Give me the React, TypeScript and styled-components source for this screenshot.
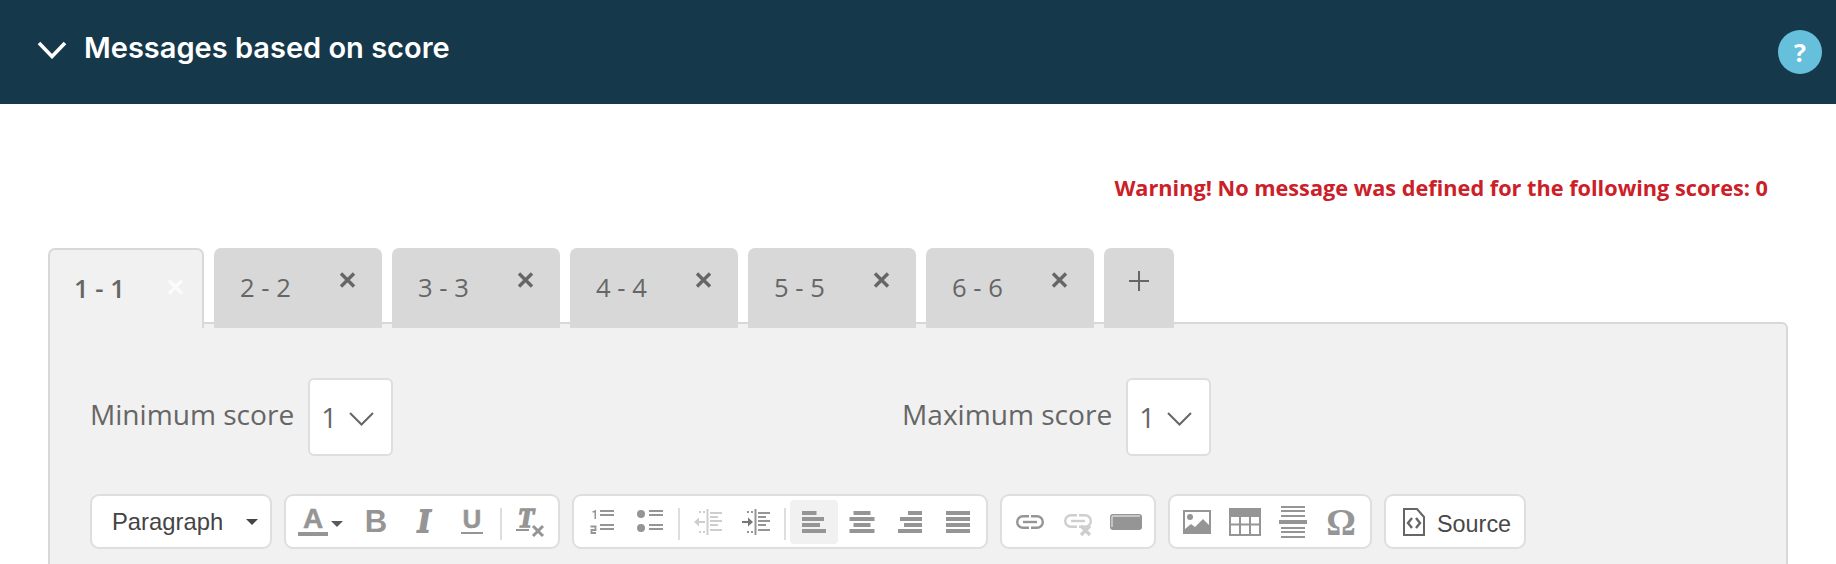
import React from "react";
import styled, { createGlobalStyle } from "styled-components";

const Global = createGlobalStyle`
  html, body { margin: 0; padding: 0; background: #fff; }
  body { overflow: hidden; font-family: "Open Sans", sans-serif; }
`;
const Page = styled.div`height: 564px; overflow: hidden; background: #fff;`;
const Header = styled.header`
  height: 104px; background: #16384b; display: flex; align-items: center;
  padding: 0 14px 0 37px; box-sizing: border-box;
`;
const Chevron = styled.svg`width: 30px; height: 18px; margin-right: 17px; margin-top: -4px; flex: none;`;
const Title = styled.h2`
  margin: -9px 0 0; flex: 1; color: #fff; font: 600 29px/34px Inter, sans-serif;
`;
const Help = styled.div`
  width: 44px; height: 44px; border-radius: 50%; background: #66c0dc; color: #fff;
  font: 700 25px/44px "Open Sans", sans-serif; text-align: center; margin-top: 0;
`;
const Warning = styled.div`
  height: 144px; box-sizing: border-box; padding: 69px 68px 0 0; text-align: right;
  color: #cc2029; font: 700 21.7px/29px "Open Sans", sans-serif;
`;
const Body = styled.div`margin: 0 48px;`;
const Tabs = styled.div`display: flex; gap: 10px; margin-bottom: -6px; position: relative; z-index: 1;`;
const Tab = styled.div<{ $active?: boolean }>`
  height: 80px; box-sizing: border-box; display: flex; justify-content: space-between; align-items: flex-start;
  width: ${p => (p.$active ? 156 : 168)}px;
  padding: ${p => (p.$active ? "23px 18px 0 24px" : "24px 26px 0 26px")};
  background: ${p => (p.$active ? "#f1f1f1" : "#d8d8d8")};
  border-radius: 7px 7px 0 0;
  ${p => (p.$active ? "border: 2px solid #d8d8d8; border-bottom: none;" : "")}
`;
const TabLabel = styled.span<{ $active?: boolean }>`
  color: #666; margin-top: -1px; font: ${p => (p.$active ? 600 : 400)} 25.6px/34px "Open Sans", sans-serif; white-space: nowrap;
`;
const CloseIcon = styled.svg<{ $active?: boolean }>`
  width: 17px; height: 16px; margin-top: ${p => (p.$active ? 6 : 0)}px;
  stroke: ${p => (p.$active ? "#fbfbfb" : "#666")}; stroke-width: 3.4; fill: none; flex: none;
`;
const AddTab = styled.div`
  width: 70px; height: 80px; background: #d8d8d8; border-radius: 7px 7px 0 0;
  display: flex; justify-content: center; padding-top: 23px; box-sizing: border-box;
`;
const PlusIcon = styled.svg`width: 20px; height: 20px; stroke: #666; stroke-width: 2; fill: none;`;
const Panel = styled.div`
  background: #f1f1f1; border: 2px solid #d8d8d8; border-radius: 6px 6px 0 0; height: 400px;
  padding: 54px 40px 0; box-sizing: border-box;
`;
const Scores = styled.div`display: flex; height: 78px; margin-bottom: 38px;`;
const Field = styled.div`display: flex; align-items: center; gap: 14px; width: 812px;`;
const FieldLabel = styled.span`color: #666; margin-top: -7px; font: 400 28.1px/38px "Open Sans", sans-serif; white-space: nowrap;`;
const Select = styled.div`
  width: 85px; height: 78px; box-sizing: border-box; background: #fff; border: 2px solid #dedede; border-radius: 6px;
  display: flex; align-items: center; padding: 0 0 0 11px; gap: 12px;
  color: #666; font: 400 27.8px/38px "Open Sans", sans-serif;
`;
const SelectChevron = styled.svg`width: 25px; height: 14px; stroke: #666; stroke-width: 2; fill: none; margin-top: 4px;`;
const Toolbar = styled.div`display: flex; gap: 12px;`;
const Group = styled.div<{ $w: number; $inset?: number }>`
  width: ${p => p.$w}px; height: 55px; box-sizing: border-box; background: #fff; border: 2px solid #dedede; border-radius: 9px;
  display: flex; padding: 4px 3px 3px ${p => p.$inset ?? 3}px; align-items: stretch;
`;
const ComboText = styled.span`
  flex: 1; color: #444; font: 400 23.8px/44px "Liberation Sans", Arial, sans-serif; padding-left: 17px;
`;
const Caret = styled.i`
  width: 0; height: 0; align-self: center; margin-right: 9px;
  border-left: 6px solid transparent; border-right: 6px solid transparent; border-top: 6px solid #444;
`;
const Btn = styled.div<{ $on?: boolean; $w?: number }>`
  width: ${p => p.$w ?? 48}px; height: 44px; flex: none; display: flex; align-items: center; justify-content: center;
  border-radius: 4px; background: ${p => (p.$on ? "#f1f1f1" : "transparent")};
`;
const Sep = styled.i`width: 2px; height: 32px; margin: 8px 4px 0; background: #dedede; flex: none;`;
const Ico = styled.svg<{ $off?: boolean; $drop?: number }>`
  display: block; flex: none; fill: #959595; stroke: none; overflow: visible;
  opacity: ${p => (p.$off ? 0.45 : 1)}; margin-top: ${p => p.$drop ?? 0}px;
`;
const SourceText = styled.span`
  color: #484848; font: 400 23.4px/44px "Liberation Sans", Arial, sans-serif; margin: 4px 0 0 12px;
`;
const SourceBtn = styled.div`display: flex; align-items: center; padding-left: 14px;`;

const Close = ({ active }: { active?: boolean }) => (
  <CloseIcon $active={active} viewBox="0 0 17 16"><path d="M2 1.5 15 14.5M15 1.5 2 14.5" /></CloseIcon>
);
const Bars = ({ rows }: { rows: [number, number][] }) => (
  <Ico width="26" height="22" viewBox="0 0 26 22">
    {rows.map(([x, w], i) => <rect key={i} x={x} y={i * 6} width={w} height={4} />)}
  </Ico>
);
const ListLines = ({ x }: { x: number }) => (
  <>
    <rect x={x} y="0" width="14" height="2" /><rect x={x} y="4" width="14" height="2" />
    <rect x={x} y="14" width="14" height="2" /><rect x={x} y="18" width="14" height="2" />
  </>
);
const IndentBody = () => (
  <>
    <rect x="5" y="2" width="2" height="2" /><rect x="9" y="2" width="2" height="2" />
    <rect x="5" y="22" width="2" height="2" /><rect x="9" y="22" width="2" height="2" />
    <rect x="12.500" y="0" width="2" height="26" />
    <rect x="16" y="3" width="12" height="2" /><rect x="16" y="7" width="8" height="2" />
    <rect x="16" y="11" width="12" height="2" /><rect x="16" y="15" width="8" height="2" />
    <rect x="16" y="20" width="12" height="2" />
  </>
);
const LinkShape = () => (
  <g fill="none" stroke="#959595" strokeWidth="2.4">
    <path d="M13 1.200H7a5.800 5.800 0 0 0 0 11.600h6" />
    <path d="M15 1.200h6a5.800 5.800 0 0 1 0 11.600h-6" />
    <path d="M7 7H21" />
  </g>
);
const tf = "Liberation Sans, Arial, sans-serif";
const sf = "Liberation Serif, serif";

export default function App() {
  return (
    <Page>
      <Global />
      <Header>
        <Chevron viewBox="0 0 30 18"><path d="M2 2 15 15.5 28 2" fill="none" stroke="#fff" strokeWidth="3.6" /></Chevron>
        <Title>Messages based on score</Title>
        <Help>?</Help>
      </Header>
      <Warning>Warning! No message was defined for the following scores: 0</Warning>
      <Body>
        <Tabs>
          <Tab $active><TabLabel $active>1 - 1</TabLabel><Close active /></Tab>
          {["2 - 2", "3 - 3", "4 - 4", "5 - 5", "6 - 6"].map(t => (
            <Tab key={t}><TabLabel>{t}</TabLabel><Close /></Tab>
          ))}
          <AddTab><PlusIcon viewBox="0 0 20 20"><path d="M10 0V20M0 10H20" /></PlusIcon></AddTab>
        </Tabs>
        <Panel>
          <Scores>
            <Field>
              <FieldLabel>Minimum score</FieldLabel>
              <Select>1<SelectChevron viewBox="0 0 25 14"><path d="M1 1 12.5 12.5 24 1" /></SelectChevron></Select>
            </Field>
            <Field>
              <FieldLabel>Maximum score</FieldLabel>
              <Select>1<SelectChevron viewBox="0 0 25 14"><path d="M1 1 12.5 12.5 24 1" /></SelectChevron></Select>
            </Field>
          </Scores>
          <Toolbar>
            <Group $w={182}><ComboText>Paragraph</ComboText><Caret /></Group>
            <Group $w={276}>
              <Btn $w={63}>
                <Ico width="46" height="28" viewBox="0 0 46 28">
                  <text x="15" y="20" textAnchor="middle" fontFamily={tf} fontWeight="700" fontSize="28" stroke="#959595" strokeWidth="0.5">A</text>
                  <rect x="0" y="24" width="30" height="4" />
                  <path d="M33 13H45L39 19Z" fill="#5a5a5a" />
                </Ico>
              </Btn>
              <Btn>
                <Ico width="24" height="28" viewBox="0 0 24 28"><text x="12" y="24" textAnchor="middle" fontFamily={tf} fontWeight="700" fontSize="31">B</text></Ico>
              </Btn>
              <Btn>
                <Ico width="24" height="28" viewBox="0 0 24 28"><text x="12" y="24" textAnchor="middle" fontFamily={sf} fontStyle="italic" fontWeight="700" fontSize="33" stroke="#959595" strokeWidth="1.8">I</text></Ico>
              </Btn>
              <Btn>
                <Ico width="24" height="28" viewBox="0 0 24 28">
                  <text x="12" y="20" textAnchor="middle" fontFamily={tf} fontWeight="700" fontSize="26" stroke="#959595" strokeWidth="0.5">U</text>
                  <rect x="1" y="24" width="22" height="2" />
                </Ico>
              </Btn>
              <Sep />
              <Btn>
                <Ico width="28" height="30" viewBox="0 0 28 30">
                  <text x="10" y="20" textAnchor="middle" fontFamily={sf} fontStyle="italic" fontWeight="700" fontSize="27" stroke="#959595" strokeWidth="1.4">T</text>
                  <rect x="0" y="22" width="13" height="2" />
                  <path d="M17 19 27 29M27 19 17 29" stroke="#959595" strokeWidth="3" fill="none" />
                </Ico>
              </Btn>
            </Group>
            <Group $w={416} $inset={4}>
              <Btn>
                <Ico width="24" height="24" viewBox="0 0 24 24">
                  <path d="M2.500 1H4.500V0H6V9H4.500V2.500H2.500Z" />
                  <path d="M0.500 16.500H5.500V20H1.500V23H6" fill="none" stroke="#959595" strokeWidth="1.800" />
                  <ListLines x={10} />
                </Ico>
              </Btn>
              <Btn>
                <Ico width="26" height="24" viewBox="0 0 26 24">
                  <circle cx="4" cy="4" r="4" /><circle cx="4" cy="18" r="4" />
                  <ListLines x={12} />
                </Ico>
              </Btn>
              <Sep />
              <Btn>
                <Ico $off width="28" height="26" viewBox="0 0 28 26">
                  <path d="M0 13 5 8.500V12H11V14H5V17.500Z" />
                  <IndentBody />
                </Ico>
              </Btn>
              <Btn>
                <Ico width="28" height="26" viewBox="0 0 28 26">
                  <path d="M11 13 6 8.500V12H0V14H6V17.500Z" fill="#777" />
                  <IndentBody />
                </Ico>
              </Btn>
              <Sep />
              <Btn $on><Bars rows={[[1, 14.5], [1, 22], [1, 18], [1, 24]]} /></Btn>
              <Btn><Bars rows={[[4.500, 17], [0.500, 25], [4.500, 17], [0.500, 25]]} /></Btn>
              <Btn><Bars rows={[[11, 14], [3, 22], [7, 18], [1, 24]]} /></Btn>
              <Btn><Bars rows={[[1, 24], [1, 24], [1, 24], [1, 24]]} /></Btn>
            </Group>
            <Group $w={156} $inset={4}>
              <Btn>
                <Ico width="28" height="14" viewBox="0 0 28 14"><LinkShape /></Ico>
              </Btn>
              <Btn>
                <Ico $off $drop={6} width="28" height="22" viewBox="0 0 28 22">
                  <LinkShape />
                  <path d="M17 12 26 21M26 12 17 21" fill="none" stroke="#959595" strokeWidth="3.200" />
                </Ico>
              </Btn>
              <Btn>
                <Ico width="32" height="16" viewBox="0 0 32 16">
                  <rect width="32" height="16" rx="3" />
                  <path d="M2 13V3.500Q2 2 3.500 2H30" fill="none" stroke="#d8d8d8" strokeWidth="1.400" />
                </Ico>
              </Btn>
            </Group>
            <Group $w={204} $inset={3}>
              <Btn>
                <Ico width="28" height="24" viewBox="0 0 28 24">
                  <path fillRule="evenodd" d="M0 0H28V24H0ZM2 2V22H26V2Z" />
                  <circle cx="7" cy="7" r="3" />
                  <path d="M2 22V19L8 14 12 17 20 9 26 15V22Z" />
                </Ico>
              </Btn>
              <Btn>
                <Ico width="32" height="28" viewBox="0 0 32 28">
                  <path fillRule="evenodd" d="M0 0H32V28H0ZM2 9V15.500H10V9ZM12 9V15.500H20V9ZM22 9V15.500H30V9ZM2 17.500V26H10V17.500ZM12 17.500V26H20V17.500ZM22 17.500V26H30V17.500Z" />
                </Ico>
              </Btn>
              <Btn>
                <Ico width="28" height="32" viewBox="0 0 28 32">
                  <rect x="2" y="0" width="24" height="2" /><rect x="2" y="4" width="24" height="2" /><rect x="2" y="9" width="24" height="2" />
                  <rect x="0" y="14" width="28" height="4" />
                  <rect x="2" y="21" width="24" height="2" /><rect x="2" y="25" width="24" height="2" /><rect x="2" y="30" width="24" height="2" />
                </Ico>
              </Btn>
              <Btn>
                <Ico width="30" height="30" viewBox="0 0 30 30">
                  <text x="15" y="28" textAnchor="middle" fontFamily={sf} fontWeight="700" fontSize="37">Ω</text>
                </Ico>
              </Btn>
            </Group>
            <Group $w={142}>
              <SourceBtn>
                <Ico width="22" height="28" viewBox="0 0 22 28">
                  <path d="M1 1H14L21 9V27H1Z" fill="none" stroke="#666" strokeWidth="2" />
                  <path d="M9 10 5 15 9 20M13 10 17 15 13 20" fill="none" stroke="#666" strokeWidth="2.400" />
                </Ico>
                <SourceText>Source</SourceText>
              </SourceBtn>
            </Group>
          </Toolbar>
        </Panel>
      </Body>
    </Page>
  );
}
